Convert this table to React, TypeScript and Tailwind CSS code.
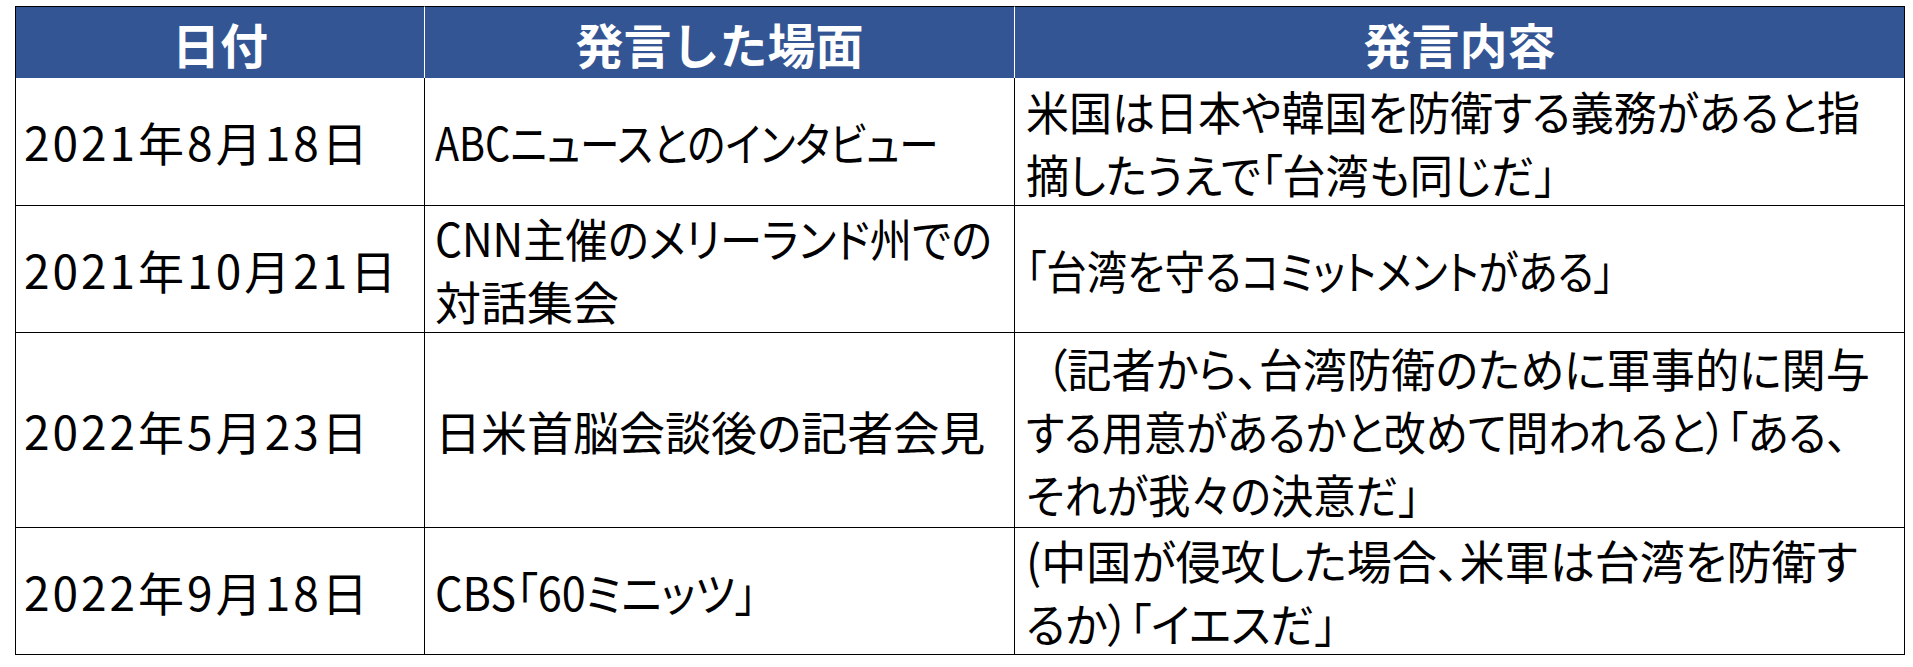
type Line = { t: string; s: string };

const ROWS: { date: string; scene: Line[]; quote: Line[]; h: string }[] = [
  {
    date: '2021年8月18日',
    scene: [{ t: 'ABCニュースとのインタビュー', s: 'scale-x-[0.86]' }],
    quote: [
      { t: '米国は日本や韓国を防衛する義務があると指', s: 'scale-x-[0.935]' },
      { t: '摘したうえで「台湾も同じだ」', s: 'scale-x-[0.94]' },
    ],
    h: 'h-[128px]',
  },
  {
    date: '2021年10月21日',
    scene: [
      { t: 'CNN主催のメリーランド州での', s: 'scale-x-[0.92]' },
      { t: '対話集会', s: 'scale-x-[1]' },
    ],
    quote: [{ t: '「台湾を守るコミットメントがある」', s: 'scale-x-[0.88]' }],
    h: 'h-[127px]',
  },
  {
    date: '2022年5月23日',
    scene: [{ t: '日米首脳会談後の記者会見', s: 'scale-x-[1]' }],
    quote: [
      { t: '（記者から、台湾防衛のために軍事的に関与', s: 'scale-x-[0.96] pl-[20px]' },
      { t: 'する用意があるかと改めて問われると）「ある、', s: 'scale-x-[0.915]' },
      { t: 'それが我々の決意だ」', s: 'scale-x-[0.92]' },
    ],
    h: 'h-[195px]',
  },
  {
    date: '2022年9月18日',
    scene: [{ t: 'CBS「60ミニッツ」', s: 'scale-x-[0.94]' }],
    quote: [
      { t: '(中国が侵攻した場合、米軍は台湾を防衛す', s: 'scale-x-[0.98]' },
      { t: 'るか）「イエスだ」', s: 'scale-x-[0.95]' },
    ],
    h: 'h-[126px]',
  },
];

// Meiryo UI isn't available, so each line is squeezed to the reference width
function Lines({ lines }: { lines: Line[] }) {
  return (
    <>
      {lines.map((l, i) => (
        <div key={i} className="whitespace-nowrap">
          <span className={`inline-block origin-left ${l.s}`}>{l.t}</span>
        </div>
      ))}
    </>
  );
}

export default function App() {
  return (
    <div className="min-h-[667px] bg-white pl-[15px] pt-[6px] font-['Noto_Sans_CJK_JP','Noto_Sans',sans-serif] text-black">
      <table className="w-[1890px] table-fixed border-separate border-spacing-0">
        <colgroup>
          <col className="w-[410px]" />
          <col className="w-[590px]" />
          <col className="w-[890px]" />
        </colgroup>
        <thead>
          <tr className="h-[72px] bg-[#335593] text-[48px] font-bold leading-none text-white">
            <th className="border-t border-l border-r border-t-black border-l-black border-r-white">日付</th>
            <th className="border-t border-r border-t-black border-r-white">発言した場面</th>
            <th className="border-t border-r border-t-black border-r-black">発言内容</th>
          </tr>
        </thead>
        <tbody className="text-[46px] leading-[63px] [font-feature-settings:'palt']">
          {ROWS.map((r) => (
            <tr key={r.date} className={r.h}>
              <td className="border-l border-r border-b border-black pl-[8px] align-middle tracking-[3px] whitespace-nowrap">
                {r.date}
              </td>
              <td className="border-r border-b border-black px-[10px] align-middle">
                <Lines lines={r.scene} />
              </td>
              <td className="border-r border-b border-black px-[11px] align-middle">
                <Lines lines={r.quote} />
              </td>
            </tr>
          ))}
        </tbody>
      </table>
    </div>
  );
}
